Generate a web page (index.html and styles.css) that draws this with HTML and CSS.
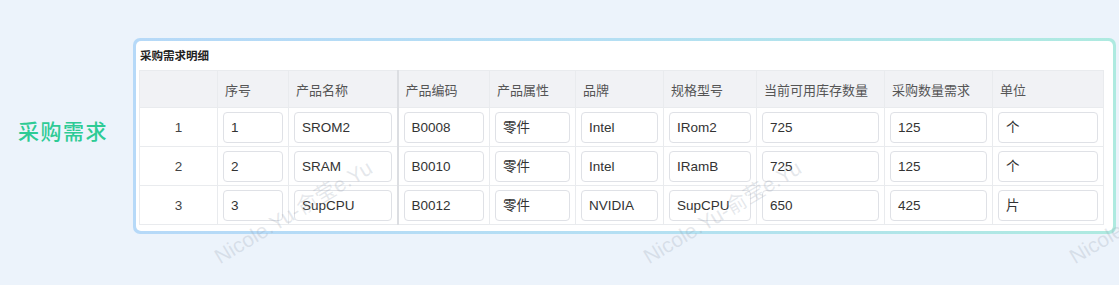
FILE: index.html
```html
<!DOCTYPE html>
<html lang="zh-CN">
<head>
<meta charset="utf-8">
<title>采购需求</title>
<link rel="stylesheet" href="styles.css">
</head>
<body>
<div class="page">
  <div class="row">
    <div class="label">采购需求</div>
    <div class="card">
      <div class="card-inner">
        <div class="card-title">采购需求明细</div>
        <table class="grid">
          <colgroup>
            <col style="width:78px"><col style="width:71px"><col style="width:109px"><col style="width:92px"><col style="width:86px"><col style="width:88px"><col style="width:93px"><col style="width:128px"><col style="width:108px"><col style="width:111px">
          </colgroup>
          <thead>
            <tr>
              <th></th><th>序号</th><th class="fixed">产品名称</th><th>产品编码</th><th>产品属性</th><th>品牌</th><th>规格型号</th><th>当前可用库存数量</th><th>采购数量需求</th><th>单位</th>
            </tr>
          </thead>
          <tbody>
            <tr>
              <td class="idx">1</td>
              <td><div class="inp">1</div></td>
              <td class="fixed"><div class="inp">SROM2</div></td>
              <td><div class="inp">B0008</div></td>
              <td><div class="inp">零件</div></td>
              <td><div class="inp">Intel</div></td>
              <td><div class="inp">IRom2</div></td>
              <td><div class="inp">725</div></td>
              <td><div class="inp">125</div></td>
              <td><div class="inp">个</div></td>
            </tr>
            <tr>
              <td class="idx">2</td>
              <td><div class="inp">2</div></td>
              <td class="fixed"><div class="inp">SRAM</div></td>
              <td><div class="inp">B0010</div></td>
              <td><div class="inp">零件</div></td>
              <td><div class="inp">Intel</div></td>
              <td><div class="inp">IRamB</div></td>
              <td><div class="inp">725</div></td>
              <td><div class="inp">125</div></td>
              <td><div class="inp">个</div></td>
            </tr>
            <tr>
              <td class="idx">3</td>
              <td><div class="inp">3</div></td>
              <td class="fixed"><div class="inp">SupCPU</div></td>
              <td><div class="inp">B0012</div></td>
              <td><div class="inp">零件</div></td>
              <td><div class="inp">NVIDIA</div></td>
              <td><div class="inp">SupCPU</div></td>
              <td><div class="inp">650</div></td>
              <td><div class="inp">425</div></td>
              <td><div class="inp">片</div></td>
            </tr>
          </tbody>
        </table>
      </div>
    </div>
  </div>
  <div class="wm wm1">Nicole.Yu-俞莹e.Yu</div>
  <div class="wm wm2">Nicole.Yu-俞莹e.Yu</div>
  <div class="wm wm3">Nicole.Yu-俞莹e.Yu</div>
</div>
</body>
</html>
```

FILE: styles.css
```css
html, body {
  margin: 0;
  padding: 0;
}
body {
  background: #ecf3fb;
  font-family: "Liberation Sans", "Noto Sans CJK SC", sans-serif;
  color: #333;
  width: 1119px;
  height: 285px;
  overflow: hidden;
}
.page {
  position: relative;
  height: 285px;
  overflow: hidden;
}
.row {
  display: flex;
  align-items: center;
  padding: 38px 0 0 18px;
}
.label {
  font-family: "Noto Sans CJK SC", sans-serif;
  font-size: 21px;
  font-weight: 500;
  letter-spacing: 1.5px;
  color: #2ecb95;
  margin-right: 25px;
  margin-bottom: 12px;
  width: 90px;
  white-space: nowrap;
  line-height: 28px;
}
.card {
  width: 983px;
  padding: 3px;
  box-sizing: border-box;
  border-radius: 7px;
  background: linear-gradient(90deg, #b6d9f8 0%, #b4dff3 50%, #aeeae0 100%);
}
.card-inner {
  background: #fff;
  border-radius: 5px;
  padding: 6px 10px 6px 3px;
}
.card-title {
  font-family: "Noto Sans CJK SC", sans-serif;
  font-size: 11.5px;
  font-weight: 700;
  color: #222;
  line-height: 16px;
  margin-left: 1px;
  margin-bottom: 7px;
}
.grid {
  border-collapse: collapse;
  table-layout: fixed;
  width: 964px;
  font-size: 13.5px;
}
.grid th, .grid td {
  border: 1px solid #e9ebee;
  padding: 0;
}
.grid th {
  background: #f1f2f5;
  height: 36px;
  text-align: left;
  font-family: "Noto Sans CJK SC", sans-serif;
  font-weight: 400;
  font-size: 13px;
  color: #555;
  padding-left: 7px;
}
.grid td {
  height: 38px;
  padding: 0 5px;
}
.grid .fixed {
  border-right: 2px solid #dcdee2;
}
.grid td.idx {
  text-align: center;
  color: #444;
}
.inp {
  height: 31px;
  box-sizing: border-box;
  border: 1px solid #dfe1e6;
  border-radius: 4px;
  padding: 0 7px;
  line-height: 29px;
  color: #333;
  white-space: nowrap;
  overflow: hidden;
}
.wm {
  position: absolute;
  font-family: "Liberation Sans", "Noto Sans CJK SC", sans-serif;
  font-size: 21px;
  color: rgba(150, 160, 175, 0.25);
  white-space: nowrap;
  transform-origin: 0 100%;
  transform: rotate(-31deg);
  pointer-events: none;
  line-height: 22px;
}
.wm1 { left: 222px; top: 246px; }
.wm2 { left: 651px; top: 246px; }
.wm3 { left: 1077px; top: 246px; }
```
